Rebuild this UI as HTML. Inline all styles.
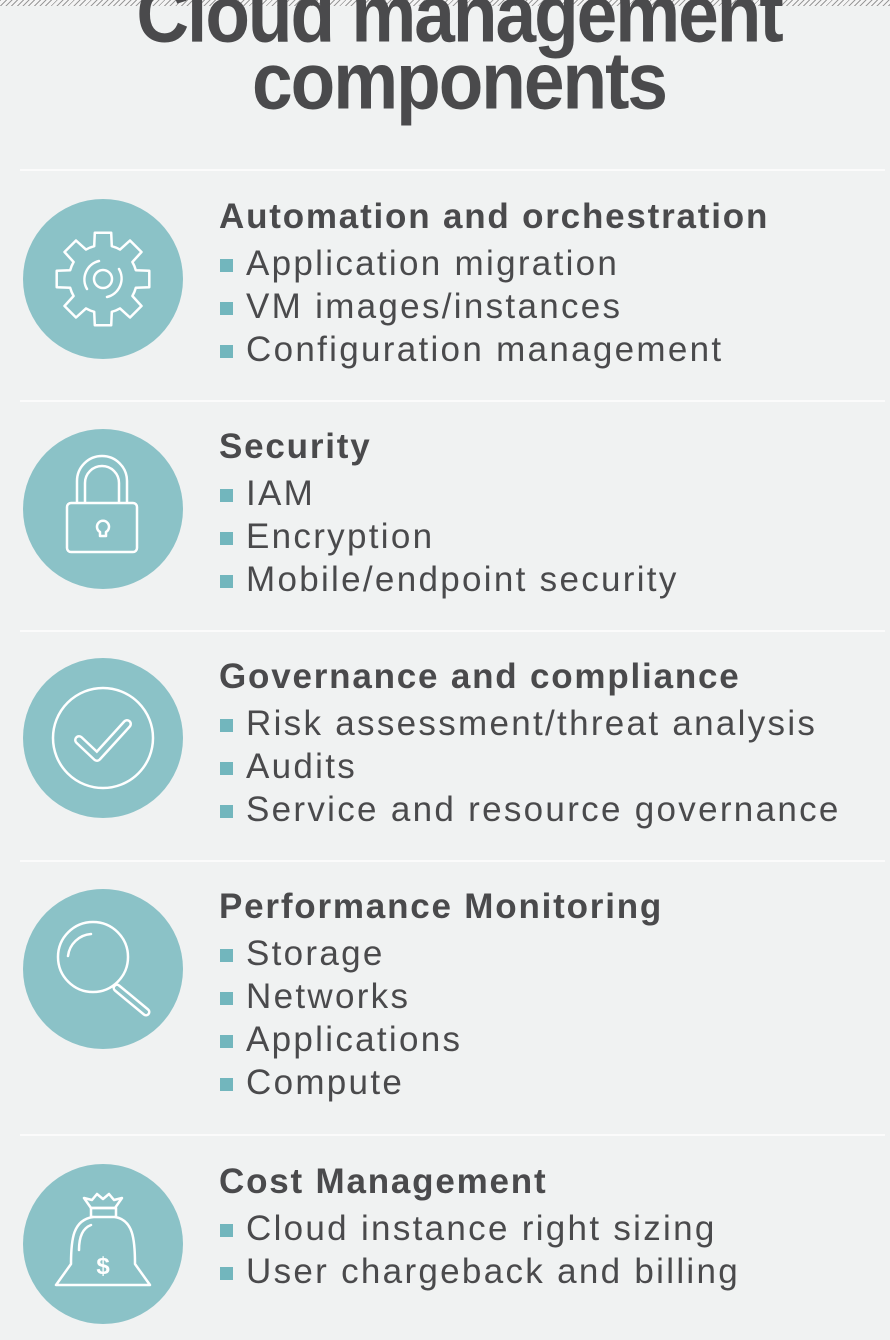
<!DOCTYPE html>
<html><head><meta charset="utf-8"><style>
*{margin:0;padding:0;box-sizing:border-box}
body{width:890px;height:1340px;background:#f0f2f2;position:relative;overflow:hidden;font-family:"Liberation Sans",sans-serif;color:#4a4a4c}
.hatch{position:absolute;left:0;top:0;width:890px;height:6px;background:repeating-linear-gradient(135deg,#9a9a9a 0 1px,#f4f4f4 1px 4px)}
.title{position:absolute;left:14px;width:890px;text-align:center;font-weight:bold;font-size:73px;letter-spacing:-2px;line-height:68px;color:#4a4a4c;transform:scaleY(1.1)}
.rule{position:absolute;left:20px;width:865px;height:2px;background:#fbfbfb}
.sec{position:absolute;left:219px}
.sec h2{font-size:35px;font-weight:bold;letter-spacing:1.8px;line-height:43px;margin-bottom:4px}
.sec div{font-size:35px;line-height:43px;letter-spacing:2.3px;position:relative;padding-left:27px;white-space:nowrap}
.sec div:before{content:"";position:absolute;left:1px;top:17px;width:13px;height:13px;background:#72b6bd}
svg.ic{position:absolute;left:23px;width:160px;height:160px}
</style></head><body>
<div class="hatch"></div>
<div class="title" style="top:-19px">Cloud management</div>
<div class="title" style="top:48px">components</div>

<div class="rule" style="top:169px"></div>
<div class="rule" style="top:400px"></div>
<div class="rule" style="top:630px"></div>
<div class="rule" style="top:860px"></div>
<div class="rule" style="top:1134px"></div>

<svg class="ic" style="top:199px" viewBox="0 0 160 160"><circle cx="80" cy="80" r="80" fill="#8bc2c7"/>
<path id="gear" fill="none" stroke="#fff" stroke-width="2.5" stroke-linejoin="round"/>
<circle cx="80" cy="80" r="9" fill="none" stroke="#fff" stroke-width="2.5"/>
<path d="M64,90 A19,19 0 0 1 76,62 M96,70 A19,19 0 0 1 84,98" fill="none" stroke="#fff" stroke-width="2.5" stroke-linecap="round"/>
</svg>

<svg class="ic" style="top:429px" viewBox="0 0 160 160"><circle cx="80" cy="80" r="80" fill="#8bc2c7"/>
<g fill="none" stroke="#fff" stroke-width="2.5" stroke-linejoin="round">
<path d="M54,74 V52 A25,25 0 0 1 104,52 V74 M62,74 V54 A17,17 0 0 1 96,54 V74"/>
<rect x="44" y="74" width="70" height="49" rx="4"/>
<path d="M77,107 V103 A6,6 0 1 1 83,103 V107 Z"/>
</g></svg>

<svg class="ic" style="top:658px" viewBox="0 0 160 160"><circle cx="80" cy="80" r="80" fill="#8bc2c7"/>
<circle cx="80" cy="80" r="50" fill="none" stroke="#fff" stroke-width="2.5"/>
<polyline points="56,82 74,99 104,66" fill="none" stroke="#fff" stroke-width="10" stroke-linecap="round" stroke-linejoin="round"/>
<polyline points="56,82 74,99 104,66" fill="none" stroke="#8bc2c7" stroke-width="5" stroke-linecap="round" stroke-linejoin="round"/>
</svg>

<svg class="ic" style="top:889px" viewBox="0 0 160 160"><circle cx="80" cy="80" r="80" fill="#8bc2c7"/>
<line x1="94" y1="99" x2="123" y2="123" stroke="#fff" stroke-width="9" stroke-linecap="round"/>
<line x1="94" y1="99" x2="123" y2="123" stroke="#8bc2c7" stroke-width="4" stroke-linecap="round"/>
<circle cx="70" cy="68" r="35" fill="#8bc2c7" stroke="#fff" stroke-width="2.5"/>
<path d="M45,67 A25,25 0 0 1 68,45" fill="none" stroke="#fff" stroke-width="2.5" stroke-linecap="round"/>
</svg>

<svg class="ic" style="top:1164px" viewBox="0 0 160 160"><circle cx="80" cy="80" r="80" fill="#8bc2c7"/>
<g fill="none" stroke="#fff" stroke-width="2.5" stroke-linejoin="round" stroke-linecap="round">
<path d="M68,44 L61,34 L69,36 L74,30 L80,35 L86,30 L91,36 L99,34 L92,44 Z"/>
<rect x="68" y="44" width="25" height="9"/>
<path d="M70,53 C50,56 48,75 48,100 L33,121 L127,121 L112,100 C112,75 110,56 92,53"/>
<path d="M56,86 C56,72 60,64 68,61"/>
</g>
<text x="80" y="110" text-anchor="middle" font-family="Liberation Sans" font-weight="bold" font-size="24" fill="#fff">$</text>
</svg>

<div class="sec" style="top:195px"><h2>Automation and orchestration</h2><div>Application migration</div><div>VM images/instances</div><div>Configuration management</div></div>
<div class="sec" style="top:425px"><h2>Security</h2><div>IAM</div><div>Encryption</div><div>Mobile/endpoint security</div></div>
<div class="sec" style="top:655px"><h2>Governance and compliance</h2><div>Risk assessment/threat analysis</div><div>Audits</div><div>Service and resource governance</div></div>
<div class="sec" style="top:885px"><h2>Performance Monitoring</h2><div>Storage</div><div>Networks</div><div>Applications</div><div>Compute</div></div>
<div class="sec" style="top:1160px"><h2>Cost Management</h2><div>Cloud instance right sizing</div><div>User chargeback and billing</div></div>

<script>
(function(){var d="",cx=80,cy=80;function p(a,r){a=a*Math.PI/180;return (cx+r*Math.cos(a)).toFixed(1)+","+(cy+r*Math.sin(a)).toFixed(1)}
for(var i=0;i<8;i++){var t=i*45-90;d+=(i?" L":"M")+p(t-15,34)+" L"+p(t-10,47)+" L"+p(t+10,47)+" L"+p(t+15,34)+" A34,34 0 0 1 "+p(t+45-15,34);}
document.getElementById("gear").setAttribute("d",d+"Z");})();
</script>
</body></html>
